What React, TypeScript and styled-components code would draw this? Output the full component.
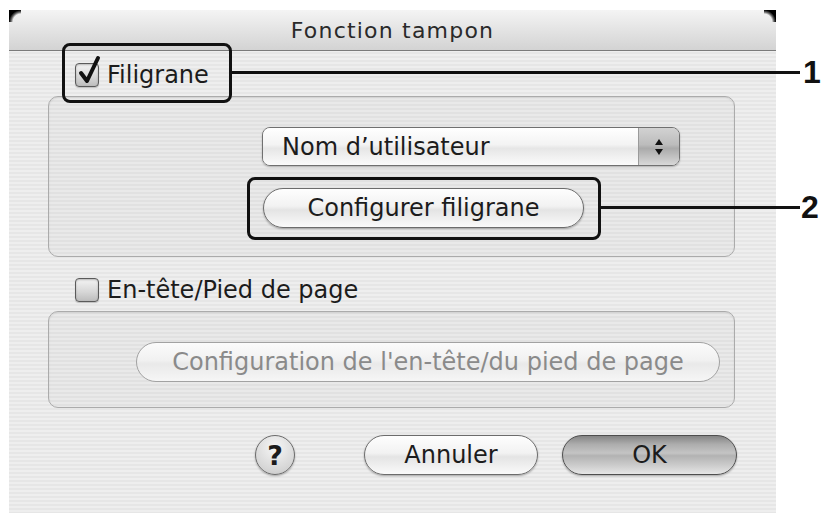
import React from "react";
import styled, { createGlobalStyle } from "styled-components";

const GlobalStyle = createGlobalStyle`
  html, body {
    margin: 0;
    padding: 0;
    background: #ffffff;
  }
  body {
    font-family: "DejaVu Sans", "Liberation Sans", sans-serif;
  }
`;

const Page = styled.div`
  position: relative;
  width: 832px;
  height: 518px;
  padding: 10px 0 0 9px;
  box-sizing: border-box;
`;

const Window = styled.div`
  position: relative;
  width: 767px;
  height: 503px;
  display: flex;
  flex-direction: column;
  background: repeating-linear-gradient(180deg, #eeeeee 0 2px, #e6e6e6 2px 4px);
`;

const Corner = styled.div<{ $side: "left" | "right" }>`
  position: absolute;
  top: 0;
  ${(p) => p.$side}: 0;
  width: 12px;
  height: 12px;
  background: radial-gradient(
    circle at ${(p) => (p.$side === "left" ? "100% 100%" : "0% 100%")},
    transparent 8px,
    rgba(0, 0, 0, 0.6) 10px,
    #000 12px
  );
`;

const TitleBar = styled.div`
  flex: none;
  height: 40px;
  display: flex;
  align-items: center;
  justify-content: center;
  background: linear-gradient(#f4f4f4, #d3d3d3);
  border-bottom: 1px solid #7a7a7a;
  font-size: 22px;
  letter-spacing: 1.2px;
  color: #2a2a2a;
`;

const Content = styled.div`
  flex: 1;
  display: flex;
  flex-direction: column;
  padding: 9px 39px 0 39px;
`;

const CheckRow = styled.label<{ $top: number }>`
  display: flex;
  align-items: center;
  gap: 8px;
  height: 30px;
  margin: ${(p) => p.$top}px 0 0 27px;
  font-size: 24px;
  color: #1c1c1c;
`;

const CheckBox = styled.span`
  position: relative;
  width: 24px;
  height: 24px;
  box-sizing: border-box;
  border: 1px solid #5a5a5a;
  border-radius: 4px;
  background: linear-gradient(#f4f4f4, #d6d6d6 60%, #bdbdbd);
  box-shadow: inset 0 1px 2px rgba(0, 0, 0, 0.25), 0 1px 1px rgba(0, 0, 0, 0.2);
`;

const Tick = styled.svg`
  position: absolute;
  left: 1px;
  top: -9px;
  overflow: visible;
`;

const GroupBox = styled.div<{ $h: number; $pl: number }>`
  height: ${(p) => p.$h}px;
  margin: 6px 2px 0 0;
  box-sizing: border-box;
  padding: 30px 0 0 ${(p) => p.$pl}px;
  border: 1px solid #ababab;
  border-radius: 10px;
  background: rgba(0, 0, 0, 0.02);
  box-shadow: inset 0 1px 2px rgba(0, 0, 0, 0.08);
  display: flex;
  flex-direction: column;
  align-items: flex-start;
  gap: 22px;
`;

const Popup = styled.div`
  width: 418px;
  height: 39px;
  box-sizing: border-box;
  display: flex;
  border: 1px solid #707070;
  border-radius: 8px;
  overflow: hidden;
  box-shadow: 0 1px 2px rgba(0, 0, 0, 0.25);
  font-size: 24px;
  color: #1c1c1c;
`;

const PopupLabel = styled.div`
  flex: 1;
  display: flex;
  align-items: center;
  padding-left: 19px;
  background: linear-gradient(#ffffff, #f3f3f3 45%, #e6e6e6 55%, #fbfbfb);
`;

const PopupArrows = styled.div`
  width: 40px;
  display: flex;
  flex-direction: column;
  align-items: center;
  justify-content: center;
  gap: 4px;
  border-left: 1px solid #9a9a9a;
  background: linear-gradient(#d2d2d2, #bcbcbc 45%, #aaaaaa 55%, #d8d8d8);
`;

const Arrow = styled.span<{ $up?: boolean }>`
  width: 0;
  height: 0;
  border-left: 4px solid transparent;
  border-right: 4px solid transparent;
  ${(p) => (p.$up ? "border-bottom: 6px solid #111;" : "border-top: 6px solid #111;")}
`;

const PillButton = styled.button<{ $w: number; $ml?: number; $kind?: "default" | "disabled" }>`
  width: ${(p) => p.$w}px;
  height: 40px;
  margin-left: ${(p) => p.$ml ?? 0}px;
  padding: 0;
  box-sizing: border-box;
  border-radius: 20px;
  border: 1px solid ${(p) => (p.$kind === "disabled" ? "#a2a2a2" : p.$kind === "default" ? "#4e4e4e" : "#6c6c6c")};
  background: ${(p) =>
    p.$kind === "default"
      ? "linear-gradient(#858585 0%, #adadad 22%, #c4c4c4 45%, #b2b2b2 52%, #cfcfcf 80%, #e6e6e6 100%)"
      : p.$kind === "disabled"
      ? "linear-gradient(#fbfbfb, #f1f1f1 45%, #e9e9e9 55%, #f6f6f6)"
      : "linear-gradient(#fefefe 0%, #f2f2f2 45%, #e4e4e4 55%, #fafafa 100%)"};
  box-shadow: ${(p) => (p.$kind === "disabled" ? "none" : "0 1px 2px rgba(0, 0, 0, 0.3)")};
  font-family: inherit;
  font-size: 24px;
  color: ${(p) => (p.$kind === "disabled" ? "#8a8a8a" : "#1c1c1c")};
`;

const Footer = styled.div`
  display: flex;
  align-items: center;
  justify-content: flex-end;
  margin-top: 27px;
  gap: 24px;
`;

const HelpButton = styled.button`
  width: 40px;
  height: 40px;
  margin-right: 45px;
  padding: 0;
  border-radius: 50%;
  border: 1px solid #6a6a6a;
  background: radial-gradient(circle at 50% 30%, #f6f6f6, #d6d6d6 70%, #c2c2c2);
  box-shadow: 0 1px 2px rgba(0, 0, 0, 0.3);
  font-family: inherit;
  font-size: 27px;
  font-weight: bold;
  color: #1c1c1c;
`;

/* numbered callouts drawn over the dialog */
const Callout = styled.div<{ $x: number; $y: number; $w: number; $h: number }>`
  position: absolute;
  left: ${(p) => p.$x}px;
  top: ${(p) => p.$y}px;
  width: ${(p) => p.$w}px;
  height: ${(p) => p.$h}px;
  box-sizing: border-box;
  border: 3px solid #111;
  border-radius: 8px;
`;

const Leader = styled.div<{ $x: number; $y: number; $w: number }>`
  position: absolute;
  left: ${(p) => p.$x}px;
  top: ${(p) => p.$y}px;
  width: ${(p) => p.$w}px;
  height: 3px;
  background: #111;
`;

const Num = styled.div<{ $x: number; $y: number }>`
  position: absolute;
  left: ${(p) => p.$x}px;
  top: ${(p) => p.$y}px;
  font: bold 32px/32px "Liberation Sans", Arial, sans-serif;
  color: #111;
`;

function App() {
  return (
    <Page>
      <GlobalStyle />
      <Window>
        <TitleBar>Fonction tampon</TitleBar>
        <Content>
          <CheckRow $top={0}>
            <CheckBox>
              <Tick width="24" height="30" viewBox="0 0 24 30">
                <path
                  d="M4 18 L10 26 L21 3"
                  fill="none"
                  stroke="#111"
                  strokeWidth="4"
                  strokeLinecap="round"
                  strokeLinejoin="round"
                />
              </Tick>
            </CheckBox>
            Filigrane
          </CheckRow>
          <GroupBox $h={161} $pl={213}>
            <Popup>
              <PopupLabel>Nom d’utilisateur</PopupLabel>
              <PopupArrows>
                <Arrow $up />
                <Arrow />
              </PopupArrows>
            </Popup>
            <PillButton $w={321} $ml={1}>Configurer filigrane</PillButton>
          </GroupBox>
          <CheckRow $top={18}>
            <CheckBox />
            En-tête/Pied de page
          </CheckRow>
          <GroupBox $h={97} $pl={87}>
            <PillButton $w={584} $kind="disabled">
              Configuration de l'en-tête/du pied de page
            </PillButton>
          </GroupBox>
          <Footer>
            <HelpButton>?</HelpButton>
            <PillButton $w={174}>Annuler</PillButton>
            <PillButton $w={175} $kind="default">OK</PillButton>
          </Footer>
        </Content>
        <Corner $side="left" />
        <Corner $side="right" />
      </Window>

      <Callout $x={62} $y={43} $w={170} $h={60} />
      <Leader $x={231} $y={71} $w={569} />
      <Num $x={803} $y={56}>1</Num>

      <Callout $x={247} $y={177} $w={354} $h={63} />
      <Leader $x={600} $y={206} $w={200} />
      <Num $x={801} $y={191}>2</Num>
    </Page>
  );
}

export default App;
